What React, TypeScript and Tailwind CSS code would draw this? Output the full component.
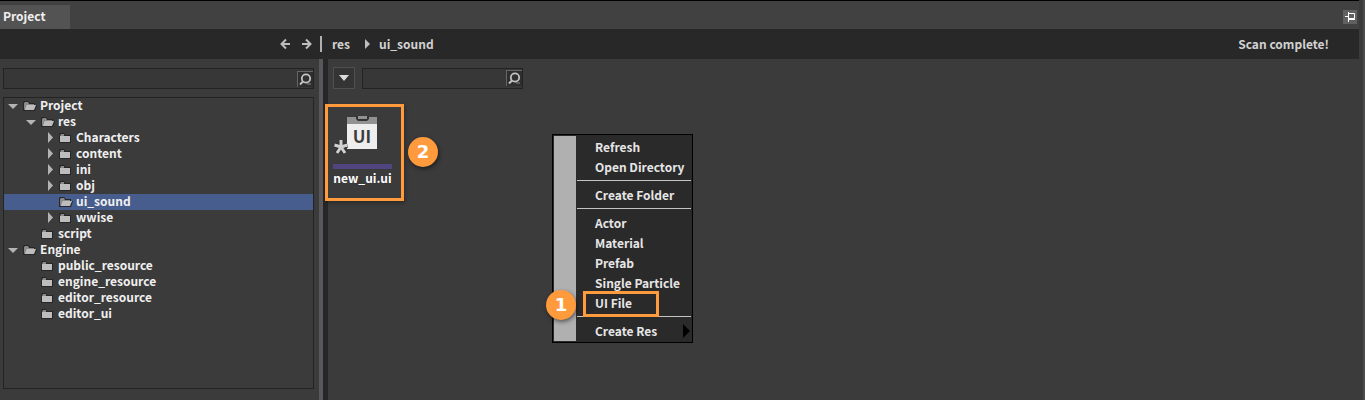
import { useState } from "react"

type Node = { name: string; depth: number; arrow?: "open" | "closed"; open?: boolean }

const tree: Node[] = [
    { name: "Project", depth: 0, arrow: "open", open: true },
    { name: "res", depth: 1, arrow: "open", open: true },
    { name: "Characters", depth: 2, arrow: "closed" },
    { name: "content", depth: 2, arrow: "closed" },
    { name: "ini", depth: 2, arrow: "closed" },
    { name: "obj", depth: 2, arrow: "closed" },
    { name: "ui_sound", depth: 2, open: true },
    { name: "wwise", depth: 2, arrow: "closed" },
    { name: "script", depth: 1 },
    { name: "Engine", depth: 0, arrow: "open", open: true },
    { name: "public_resource", depth: 1 },
    { name: "engine_resource", depth: 1 },
    { name: "editor_resource", depth: 1 },
    { name: "editor_ui", depth: 1 },
]

const indent = ["pl-1", "pl-[22px]", "pl-[40px]"]

const menu = [
    ["Refresh", "Open Directory"],
    ["Create Folder"],
    ["Actor", "Material", "Prefab", "Single Particle", "UI File"],
    ["Create Res"],
]

function Arrow({ dir }: { dir?: "open" | "closed" }) {
    return (
        <svg width="10" height="12" viewBox="0 0 10 12" className="shrink-0">
            {dir === "open" && <path d="M0 4h10L5 9z" fill="#b4b4b4" />}
            {dir === "closed" && <path d="M4 0l5 5.500L4 11z" fill="#b4b4b4" />}
        </svg>
    )
}

function Folder({ open }: { open?: boolean }) {
    return (
        <svg width="14" height="12" viewBox="0 0 14 12" className="block shrink-0">
            {open ? (
                <>
                    <path d="M0 11V2l1-1h4l2 2h5v2h2l-2 6z" fill="#262626" />
                    <path d="M1 10V3l1-1h3l1 2h5v1H4z" fill="#8a8a8a" />
                    <path d="M3.500 5H13l-2 5H1.500z" fill="#bdbdbd" />
                </>
            ) : (
                <>
                    <path d="M0 11V3l1-2h4l1 2h6v8z" fill="#262626" />
                    <path d="M1 4l1-2h3v2z" fill="#8a8a8a" />
                    <path d="M1 4h10v6H1z" fill="#bdbdbd" />
                </>
            )}
        </svg>
    )
}

function SearchBox({ label, className }: { label: string; className: string }) {
    return (
        <div className={`flex h-[21px] items-center border border-[#232323] bg-[#373737] ${className}`}>
            <input aria-label={label} className="h-full min-w-0 flex-1 bg-transparent px-1 text-xs outline-none" />
            <button aria-label="Search" className="h-4 w-4 border-t border-l border-[#666666] bg-[#2e2e2e]">
                <svg width="15" height="15" viewBox="0 0 15 15">
                    <path d="M5 9.500L2 12.500" stroke="#c4c4c4" strokeWidth="2" />
                    <circle cx="8" cy="6.500" r="4.200" fill="#303030" stroke="#c4c4c4" strokeWidth="1.800" />
                    <path d="M9 12h4" stroke="#8a8a8a" />
                </svg>
            </button>
        </div>
    )
}

function NavArrow({ back }: { back?: boolean }) {
    return (
        <svg width="10" height="12" viewBox="0 0 10 12" fill="none" stroke="#bebebe" strokeWidth="2">
            {back ? <path d="M6 1.500L1.500 6 6 10.500M1.500 6H10" /> : <path d="M4 1.500L8.500 6 4 10.500M8.500 6H0" />}
        </svg>
    )
}

function Badge({ n }: { n: number }) {
    return (
        <span className="flex h-[30px] w-[30px] items-center justify-center rounded-full bg-[#ff9b3d] font-['DejaVu_Sans',sans-serif] text-[18px] font-bold text-white shadow-[1px_2px_4px_rgba(0,0,0,0.5)]">
            {n}
        </span>
    )
}

function ContextMenu() {
    return (
        <div className="absolute top-[75px] left-[224px] flex w-[141px] border border-black bg-[#2a2a2a] p-px">
            <div className="w-[22px] shrink-0 bg-[#b0b0b0]" />
            <div className="flex-1 pt-px pl-px">
                {menu.map((group, i) => (
                    <div key={i}>
                        {i > 0 && <div className="mt-[3px] mb-1 h-px bg-[#c4c4c4]" />}
                        {group.map((item) => (
                            <button key={item} className="flex h-5 w-full items-center justify-between pl-[18px] text-left text-[#e6e6e6]">
                                {item}
                                {item === "Create Res" && (
                                    <svg width="8" height="14" viewBox="0 0 8 14">
                                        <path d="M0 0l7 7-7 7z" fill="#000" />
                                    </svg>
                                )}
                            </button>
                        ))}
                    </div>
                ))}
            </div>
            <div className="absolute top-[156px] left-[30px] h-[26px] w-[76px] border-3 border-[#ff9b3d]" />
            <div className="absolute top-[155px] -left-[7px]">
                <Badge n={1} />
            </div>
        </div>
    )
}

function FileItem() {
    return (
        <button className="flex w-[59px] flex-col items-center text-white">
            <svg width="59" height="44" viewBox="0 0 59 44">
                <path d="M14 1h30v8H14z" fill="#929292" />
                <path d="M23 0h13v3l-2 2h-9l-2-2z" fill="#333" />
                <path d="M25 0h9v3h-9z" fill="#929292" />
                <path d="M14 8h30v25H14z" fill="#eeeeee" />
                <text x="29" y="27" textAnchor="middle" fontFamily="Noto Sans CJK SC, sans-serif" fontWeight="bold" fontSize="17" fill="#3c3c3c">UI</text>
                <g stroke="#303030" strokeWidth="5">
                    <path d="M8 31v-7M8 31l-6.500-2M8 31l6.500-2M8 31l-4 6M8 31l4 6" />
                </g>
                <g stroke="#d0d0d0" strokeWidth="3">
                    <path d="M8 31v-7M8 31l-6.500-2M8 31l6.500-2M8 31l-4 6M8 31l4 6" />
                </g>
            </svg>
            <span className="mt-1 h-[5px] w-full bg-[#51457f]" />
            <span className="leading-[18px]">new_ui.ui</span>
        </button>
    )
}

export default function App() {
    const [selected, setSelected] = useState("ui_sound")

    return (
        <div className="flex min-h-screen bg-[#414141] font-['Noto_Sans_CJK_SC','Noto_Sans',sans-serif] text-xs leading-4 font-bold text-[#f0f0f0]">
            <div className="flex min-w-0 flex-1 flex-col">
                <header className="flex h-[29px] items-end justify-between border-t border-black pr-0.5">
                    <button className="h-6 w-[70px] bg-[#535353] pb-0.5 pl-[3px] text-left">Project</button>
                    <button aria-label="Pin" className="mb-[5px] h-3.5 w-3.5 bg-[#606060]">
                        <svg width="14" height="14" viewBox="0 0 14 14" fill="none" stroke="#fff">
                            <path d="M2 6.500h3M5.500 2v10" />
                            <path d="M5.500 3.500h6v5h-6M5.500 9.500h6.500" />
                        </svg>
                    </button>
                </header>

                <nav className="flex h-[30px] items-center bg-[#282828] pr-[30px] text-[#d2d2d2]">
                    <div className="flex w-[322px] items-center justify-end">
                        <button aria-label="Back"><NavArrow back /></button>
                        <button aria-label="Forward" className="mr-2 ml-3"><NavArrow /></button>
                        <span className="h-4 w-0.5 bg-[#b0b0b0]" />
                    </div>
                    <a href="#res" className="ml-2.5">res</a>
                    <svg width="6" height="10" viewBox="0 0 6 10" className="mr-2 ml-[15px]">
                        <path d="M0 0l5 5-5 5z" fill="#bebebe" />
                    </svg>
                    <a href="#ui_sound">ui_sound</a>
                    <span className="ml-auto">Scan complete!</span>
                </nav>

                <div className="flex flex-1 bg-[#3b3b3b]">
                    <aside className="flex w-[319px] shrink-0 flex-col pt-[9px] pr-[5px] pb-[11px] pl-[3px]">
                        <SearchBox label="Search folders" className="w-full" />
                        <ul className="mt-2 flex-1 border border-[#232323]">
                            {tree.map((n) => (
                                <li key={n.name} className={selected === n.name ? "bg-[#475d8d]" : ""}>
                                    <button onClick={() => setSelected(n.name)} className={`flex h-4 w-full items-center ${indent[n.depth]}`}>
                                        <Arrow dir={n.arrow} />
                                        <span className="mr-[3px] ml-[5px]"><Folder open={n.open} /></span>
                                        <span className="pb-0.5">{n.name}</span>
                                    </button>
                                </li>
                            ))}
                        </ul>
                    </aside>
                    <div className="w-1 shrink-0 bg-[#58585c]" />
                    <div className="w-[5px] shrink-0 bg-[#262626]" />

                    <main className="relative min-w-0 flex-1 pt-2 pl-[5px]">
                        <div className="flex items-center gap-[7px]">
                            <button aria-label="Filter" className="flex h-[22px] w-[22px] items-center justify-center rounded-[1px] border border-[#505050] bg-[#343434]">
                                <svg width="10" height="6" viewBox="0 0 10 6">
                                    <path d="M0 0h10L5 6z" fill="#dcdcdc" />
                                </svg>
                            </button>
                            <SearchBox label="Search files" className="w-[161px]" />
                        </div>
                        <div className="mt-[27px]">
                            <FileItem />
                        </div>
                        <div className="absolute top-[45px] -left-[3px] h-[97px] w-[79px] border-3 border-[#ff9b3d] shadow-[1px_2px_4px_rgba(0,0,0,0.3)]" />
                        <div className="absolute top-[78px] left-20">
                            <Badge n={2} />
                        </div>
                        <ContextMenu />
                    </main>
                </div>
            </div>
            <div className="w-1.5 shrink-0 border-r-2 border-[#4c4c4c] bg-[#3b3b3b]" />
        </div>
    )
}
